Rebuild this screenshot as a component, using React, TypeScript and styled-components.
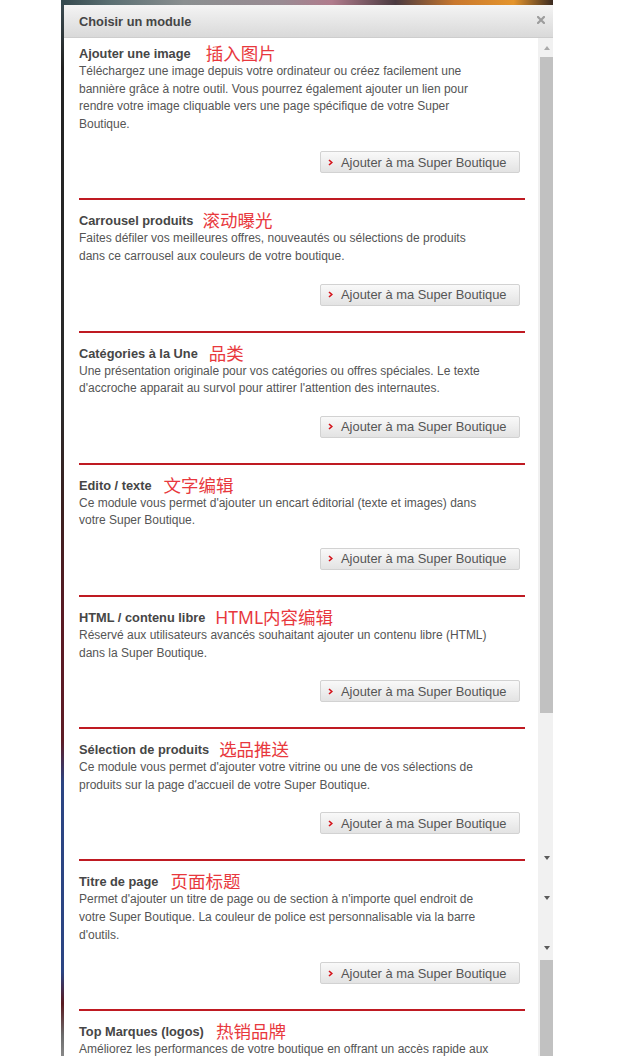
import React from "react";
import styled, { createGlobalStyle } from "styled-components";

const Global = createGlobalStyle`
  html, body { margin: 0; padding: 0; background: #fff; overflow: hidden; }
  body { font-family: "Liberation Sans", Arial, sans-serif; }
`;

const Page = styled.div`
  width: 618px;
  height: 1056px;
  overflow: hidden;
  background: #fff;
  padding-left: 61px;
  box-sizing: border-box;
`;

const Frame = styled.div`
  width: 492px;
  height: 1056px;
  display: grid;
  grid-template-columns: 3px 1fr;
  grid-template-rows: 5px 1fr;
`;

const TopEdge = styled.div`
  grid-column: 1 / -1;
  background: linear-gradient(
    90deg,
    #33484d 0%,
    #5b6f72 10%,
    #8a8f90 25%,
    #9a8b93 45%,
    #b07b8c 55%,
    #4a3a40 68%,
    #c9782e 80%,
    #e4942c 92%,
    #3a2a20 100%
  );
`;

const LeftEdge = styled.div`
  background: linear-gradient(
    180deg,
    #3a4a50 0%,
    #222 6%,
    #2b2b2b 38%,
    #3b2020 48%,
    #5a1a24 58%,
    #5e1c26 70%,
    #2c4583 74%,
    #2c4583 92%,
    #5a1a20 95%,
    #6b6b6b 98%,
    #888 100%
  );
`;

const Dialog = styled.section`
  display: flex;
  flex-direction: column;
  min-height: 0;
  background: #fff;
`;

const Header = styled.header`
  height: 33px;
  box-sizing: border-box;
  display: flex;
  align-items: center;
  justify-content: space-between;
  padding: 0 8px 0 15px;
  background: linear-gradient(#f4f4f4, #d9d9d9);
  border-bottom: 1px solid #cdcdcd;
`;

const HeaderTitle = styled.h1`
  margin: 0;
  font-size: 12.8px;
  font-weight: bold;
  color: #454545;
`;

const CloseButton = styled.button`
  border: 0;
  padding: 0;
  background: none;
  width: 8px;
  height: 8px;
  display: flex;
  margin-top: -2px;
`;

const Body = styled.div`
  flex: 1;
  min-height: 0;
  display: flex;
  overflow: hidden;
`;

const Content = styled.div`
  flex: 1;
  padding: 0 13px 0 15px;
  display: flex;
  flex-direction: column;
`;

const Section = styled.article`
  padding: 12px 0 25px;
  border-bottom: 2px solid #bf1a22;
  &:first-child {
    padding-top: 7px;
  }
`;

const TitleRow = styled.div`
  display: flex;
  align-items: center;
  height: 18px;
`;

const ModTitle = styled.h2`
  margin: 0;
  font-size: 12.8px;
  font-weight: bold;
  color: #464646;
  line-height: 18px;
`;

const Note = styled.span<{ $gap: number }>`
  margin-left: ${({ $gap }) => $gap}px;
  color: #e8383d;
  font-family: "Noto Sans", "Noto Sans CJK SC", sans-serif;
  font-size: 17.5px;
  line-height: 18px;
  position: relative;
  top: -1px;
`;

const Desc = styled.p`
  margin: 0;
  font-size: 12px;
  line-height: 17.6px;
  color: #555;
`;

const Line = styled.span`
  display: block;
  white-space: nowrap;
`;

const ButtonRow = styled.div`
  display: flex;
  justify-content: flex-end;
  margin-top: 18px;
  padding-right: 5px;
`;

const AddButton = styled.button`
  width: 200px;
  height: 22px;
  box-sizing: border-box;
  border: 1px solid #d2d2d2;
  border-radius: 2px;
  background: linear-gradient(#f9f9f9, #e3e3e3);
  display: flex;
  align-items: center;
  gap: 8px;
  padding: 0 0 0 7px;
  font-family: "Liberation Sans", Arial, sans-serif;
  font-size: 12.9px;
  color: #555;
`;

const Scrollbar = styled.div`
  width: 15px;
  display: flex;
  flex-direction: column;
  background: #f1f1f1;
`;

const Slot = styled.div<{ $h: number }>`
  height: ${({ $h }) => $h}px;
  flex: none;
  display: flex;
  align-items: center;
  justify-content: center;
  padding-left: 2px;
`;

const Thumb = styled.div<{ $h?: number }>`
  ${({ $h }) => ($h ? `height: ${$h}px; flex: none;` : "flex: 1;")}
  margin-left: 2px;
  background: #c1c1c1;
`;

const Triangle = styled.span<{ $up?: boolean }>`
  width: 0;
  height: 0;
  border-left: 3.5px solid transparent;
  border-right: 3.5px solid transparent;
  ${({ $up }) =>
    $up ? "border-bottom: 4px solid #a9a9a9;" : "border-top: 4px solid #5a5a5a;"}
`;

type Mod = { title: string; note: string; gap: number; lines: string[] };

const modules: Mod[] = [
  {
    title: "Ajouter une image",
    note: "插入图片",
    gap: 15,
    lines: [
      "Téléchargez une image depuis votre ordinateur ou créez facilement une",
      "bannière grâce à notre outil. Vous pourrez également ajouter un lien pour",
      "rendre votre image cliquable vers une page spécifique de votre Super",
      "Boutique.",
    ],
  },
  {
    title: "Carrousel produits",
    note: "滚动曝光",
    gap: 9,
    lines: [
      "Faites défiler vos meilleures offres, nouveautés ou sélections de produits",
      "dans ce carrousel aux couleurs de votre boutique.",
    ],
  },
  {
    title: "Catégories à la Une",
    note: "品类",
    gap: 11,
    lines: [
      "Une présentation originale pour vos catégories ou offres spéciales. Le texte",
      "d'accroche apparait au survol pour attirer l'attention des internautes.",
    ],
  },
  {
    title: "Edito / texte",
    note: "文字编辑",
    gap: 12,
    lines: [
      "Ce module vous permet d'ajouter un encart éditorial (texte et images) dans",
      "votre Super Boutique.",
    ],
  },
  {
    title: "HTML / contenu libre",
    note: "HTML内容编辑",
    gap: 10,
    lines: [
      "Réservé aux utilisateurs avancés souhaitant ajouter un contenu libre (HTML)",
      "dans la Super Boutique.",
    ],
  },
  {
    title: "Sélection de produits",
    note: "选品推送",
    gap: 10,
    lines: [
      "Ce module vous permet d'ajouter votre vitrine ou une de vos sélections de",
      "produits sur la page d'accueil de votre Super Boutique.",
    ],
  },
  {
    title: "Titre de page",
    note: "页面标题",
    gap: 12,
    lines: [
      "Permet d'ajouter un titre de page ou de section à n'importe quel endroit de",
      "votre Super Boutique. La couleur de police est personnalisable via la barre",
      "d'outils.",
    ],
  },
  {
    title: "Top Marques (logos)",
    note: "热销品牌",
    gap: 12,
    lines: [
      "Améliorez les performances de votre boutique en offrant un accès rapide aux",
    ],
  },
];

const Chevron = () => (
  <svg width="5" height="7" viewBox="0 0 5 7">
    <polyline points="1,1 3.8,3.5 1,6" fill="none" stroke="#d4141c" strokeWidth="1.6" />
  </svg>
);

const CloseIcon = () => (
  <svg width="8" height="8" viewBox="0 0 8 8">
    <path d="M1 1 L7 7 M7 1 L1 7" stroke="#9d9d9d" strokeWidth="2.2" strokeLinecap="square" />
  </svg>
);

export default function App() {
  return (
    <>
      <Global />
      <Page>
        <Frame>
          <TopEdge />
          <LeftEdge />
          <Dialog>
            <Header>
              <HeaderTitle>Choisir un module</HeaderTitle>
              <CloseButton aria-label="Fermer">
                <CloseIcon />
              </CloseButton>
            </Header>
            <Body>
              <Content>
                {modules.map((m) => (
                  <Section key={m.title}>
                    <TitleRow>
                      <ModTitle>{m.title}</ModTitle>
                      <Note $gap={m.gap}>{m.note}</Note>
                    </TitleRow>
                    <Desc>
                      {m.lines.map((l) => (
                        <Line key={l}>{l}</Line>
                      ))}
                    </Desc>
                    <ButtonRow>
                      <AddButton>
                        <Chevron />
                        Ajouter à ma Super Boutique
                      </AddButton>
                    </ButtonRow>
                  </Section>
                ))}
              </Content>
              <Scrollbar>
                <Slot $h={19}>
                  <Triangle $up />
                </Slot>
                <Thumb $h={656} />
                <Slot $h={141} />
                <Slot $h={8}>
                  <Triangle />
                </Slot>
                <Slot $h={32} />
                <Slot $h={8}>
                  <Triangle />
                </Slot>
                <Slot $h={42} />
                <Slot $h={8}>
                  <Triangle />
                </Slot>
                <Slot $h={8} />
                <Thumb />
              </Scrollbar>
            </Body>
          </Dialog>
        </Frame>
      </Page>
    </>
  );
}
